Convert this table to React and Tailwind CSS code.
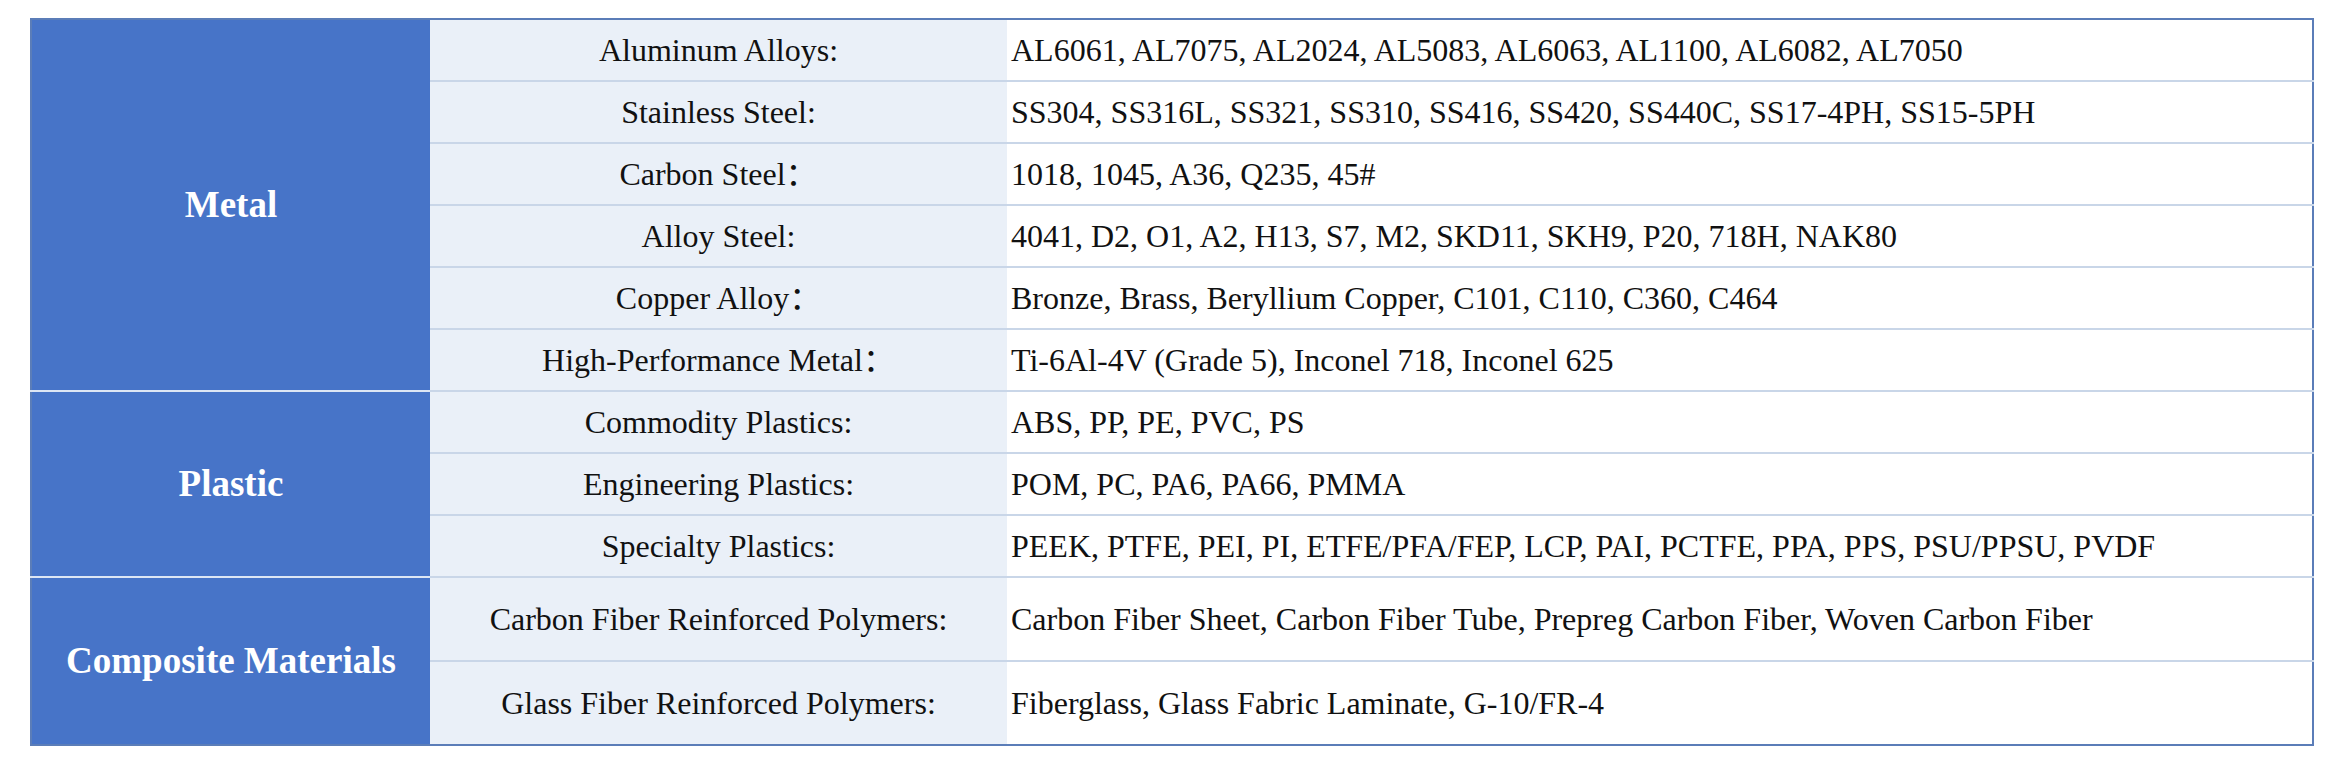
import React from 'react';

const groups = [
  {
    name: 'Metal',
    rowClass: 'h-[62px]',
    rows: [
      ['Aluminum Alloys:', 'AL6061, AL7075, AL2024, AL5083, AL6063, AL1100, AL6082, AL7050'],
      ['Stainless Steel:', 'SS304, SS316L, SS321, SS310, SS416, SS420, SS440C, SS17-4PH, SS15-5PH'],
      ['Carbon Steel：', '1018, 1045, A36, Q235, 45#'],
      ['Alloy Steel:', '4041, D2, O1, A2, H13, S7, M2, SKD11, SKH9, P20, 718H, NAK80'],
      ['Copper Alloy：', 'Bronze, Brass, Beryllium Copper, C101, C110, C360, C464'],
      ['High-Performance Metal：', 'Ti-6Al-4V (Grade 5), Inconel 718, Inconel 625'],
    ],
  },
  {
    name: 'Plastic',
    rowClass: 'h-[62px]',
    rows: [
      ['Commodity Plastics:', 'ABS, PP, PE, PVC, PS'],
      ['Engineering Plastics:', 'POM, PC, PA6, PA66, PMMA'],
      ['Specialty Plastics:', 'PEEK, PTFE, PEI, PI, ETFE/PFA/FEP, LCP, PAI, PCTFE, PPA, PPS, PSU/PPSU, PVDF'],
    ],
  },
  {
    name: 'Composite Materials',
    rowClass: 'h-[84px]',
    rows: [
      ['Carbon Fiber Reinforced Polymers:', 'Carbon Fiber Sheet, Carbon Fiber Tube, Prepreg Carbon Fiber, Woven Carbon Fiber'],
      ['Glass Fiber Reinforced Polymers:', 'Fiberglass, Glass Fabric Laminate, G-10/FR-4'],
    ],
  },
];

export default function App() {
  return (
    <div className="bg-white min-h-[762px] pt-[18px] pl-[30px] font-['Liberation_Serif','Noto_Sans_CJK_SC',serif] text-[#111]">
      <table className="table-fixed w-[2284px] border-collapse border-2 border-[#5b7db8]">
        <colgroup>
          <col className="w-[399px]" />
          <col className="w-[577px]" />
          <col />
        </colgroup>
        <tbody>
          {groups.map((g, gi) =>
            g.rows.map(([label, value], ri) => {
              const lastInGroup = ri === g.rows.length - 1;
              const lastAll = gi === groups.length - 1 && lastInGroup;
              return (
                <tr key={label} className={g.rowClass}>
                  {ri === 0 && (
                    <td
                      rowSpan={g.rows.length}
                      className={`bg-[#4774c8] text-white text-center font-bold text-[37px] ${
                        gi < groups.length - 1 ? 'border-b-2 border-b-[#dde6f4]' : ''
                      }`}
                    >
                      {g.name}
                    </td>
                  )}
                  <td
                    className={`bg-[#eaf0f8] text-center text-[32px] ${
                      lastAll ? '' : 'border-b-2 border-b-[#c9d6e8]'
                    }`}
                  >
                    {label}
                  </td>
                  <td
                    className={`bg-white pl-[4px] text-[32px] whitespace-nowrap ${
                      lastAll ? '' : 'border-b-2 border-b-[#c9d6e8]'
                    }`}
                  >
                    {value}
                  </td>
                </tr>
              );
            })
          )}
        </tbody>
      </table>
    </div>
  );
}
